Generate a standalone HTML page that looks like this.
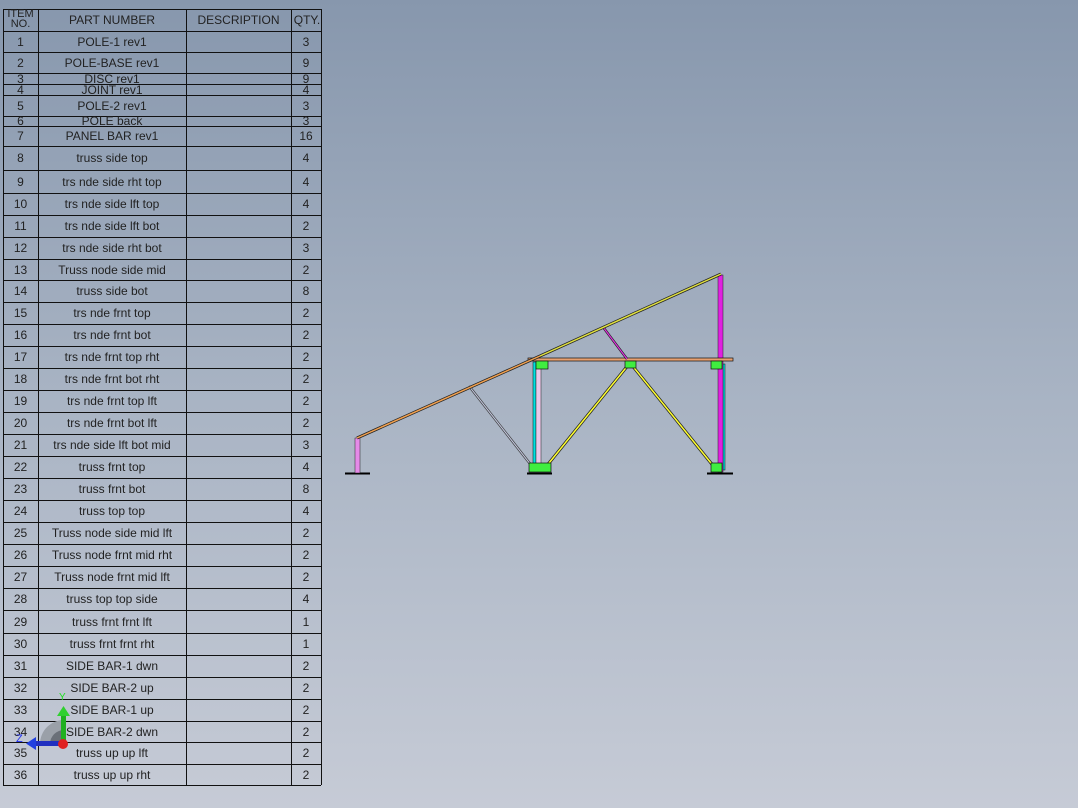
<!DOCTYPE html>
<html><head><style>
body{margin:0;width:1078px;height:808px;overflow:hidden;background:linear-gradient(#8797ad,#a9b4c4 50%,#c6cbd6);font-family:"Liberation Sans",sans-serif;position:relative}
.h{position:absolute;left:3px;width:318px;height:1px;background:#111}
.v{position:absolute;top:9px;height:776px;width:1px;background:#111}
.t{position:absolute;font-size:12px;color:#222;text-align:center;white-space:nowrap;line-height:12px}
</style></head><body>
<div id="tb"></div>
<svg style="position:absolute;left:0;top:0" width="1078" height="808">
<g stroke-linecap="butt">
<line x1="345" y1="473.5" x2="370" y2="473.5" stroke="#000" stroke-width="2"/>
<line x1="527" y1="473.5" x2="552" y2="473.5" stroke="#000" stroke-width="2"/>
<line x1="707" y1="473.5" x2="733" y2="473.5" stroke="#000" stroke-width="2"/>
<rect x="355" y="438" width="5" height="35" fill="#e58ae8" stroke="#222" stroke-width=".5"/>
<line x1="469" y1="386" x2="531" y2="465" stroke="#444" stroke-width="2.5"/>
<line x1="469" y1="386" x2="531" y2="465" stroke="#c8cde8" stroke-width="1"/>
<rect x="533" y="362" width="3" height="106" fill="#00e0e0" stroke="#111" stroke-width=".5"/>
<rect x="536" y="362" width="5" height="106" fill="#e8c8e8" stroke="#222" stroke-width=".5"/>
<rect x="723" y="364" width="2" height="106" fill="#00e0e0" stroke="#111" stroke-width=".5"/>
<rect x="718" y="275" width="5" height="197" fill="#e020e0" stroke="#222" stroke-width=".5"/>
<rect x="528" y="358" width="205" height="3" fill="#e8a070" stroke="#111" stroke-width=".7"/>
<line x1="545" y1="468" x2="629" y2="364" stroke="#222" stroke-width="3"/>
<line x1="545" y1="468" x2="629" y2="364" stroke="#ffff30" stroke-width="1.5"/>
<line x1="631" y1="364" x2="715" y2="468" stroke="#222" stroke-width="3"/>
<line x1="631" y1="364" x2="715" y2="468" stroke="#ffff30" stroke-width="1.5"/>
<line x1="603" y1="327" x2="627" y2="359" stroke="#222" stroke-width="2.5"/>
<line x1="603" y1="327" x2="627" y2="359" stroke="#e030e0" stroke-width="1.2"/>
<line x1="357" y1="438" x2="540" y2="356" stroke="#222" stroke-width="3"/>
<line x1="357" y1="438" x2="540" y2="356" stroke="#f0a050" stroke-width="1.5"/>
<line x1="540" y1="356" x2="721" y2="274" stroke="#222" stroke-width="3"/>
<line x1="540" y1="356" x2="721" y2="274" stroke="#e0e040" stroke-width="1.5"/>
<g fill="#40ee40" stroke="#111" stroke-width=".7">
<rect x="536" y="361" width="12" height="8"/><rect x="625" y="361" width="11" height="7"/><rect x="711" y="361" width="11" height="8"/>
<rect x="529" y="463" width="22" height="9"/><rect x="711" y="463" width="11" height="9"/></g>
</g>
<g>
<path d="M40 744 A24 24 0 0 1 64 720 L64 744Z" fill="#9aa0a8"/>
<path d="M50 744 A14 14 0 0 1 64 730 L64 744Z" fill="#6a7078"/>
<rect x="61" y="714" width="5" height="30" fill="#20b020"/><path d="M57 716 L63.5 706 L70 716Z" fill="#30d030"/>
<rect x="34" y="741" width="28" height="5" fill="#2030c0"/><path d="M36 737 L26 743.5 L36 750Z" fill="#2040e0"/>
<circle cx="63" cy="744" r="5" fill="#e02020"/>
<text x="59" y="700" font-size="10" fill="#20e020" font-family="Liberation Sans">Y</text>
<text x="16" y="742" font-size="11" fill="#2030f0" font-family="Liberation Sans">Z</text>
</g>
</svg>
<script>
var ys=[9,31,52,73,84,95,116,126,146,170,193,215,237,259,280,302,324,346,368,390,412,434,456,478,500,522,544,566,588,610,633,655,677,699,721,742,764,785];
var d=[["POLE-1 rev1",3],["POLE-BASE rev1",9],["DISC rev1",9],["JOINT rev1",4],["POLE-2 rev1",3],["POLE back",3],["PANEL BAR rev1",16],["truss side top",4],["trs nde side rht top",4],["trs nde side lft top",4],["trs nde side lft bot",2],["trs nde side rht bot",3],["Truss node side mid",2],["truss side bot",8],["trs nde frnt top",2],["trs nde frnt bot",2],["trs nde frnt top rht",2],["trs nde frnt bot rht",2],["trs nde frnt top lft",2],["trs nde frnt bot lft",2],["trs nde side lft bot mid",3],["truss frnt top",4],["truss frnt bot",8],["truss top top",4],["Truss node side mid lft",2],["Truss node frnt mid rht",2],["Truss node frnt mid lft",2],["truss top top side",4],["truss frnt frnt lft",1],["truss frnt frnt rht",1],["SIDE BAR-1 dwn",2],["SIDE BAR-2 up",2],["SIDE BAR-1 up",2],["SIDE BAR-2 dwn",2],["truss up up lft",2],["truss up up rht",2]];
var h="";ys.forEach(function(y){h+='<div class="h" style="top:'+y+'px"></div>'});
[3,38,186,291,321].forEach(function(x){h+='<div class="v" style="left:'+x+'px"></div>'});
function t(x,w,y,s){return '<div class="t" style="left:'+x+'px;width:'+w+'px;top:'+y+'px">'+s+'</div>'}
h+='<div class="t" style="left:3px;width:35px;top:9px;font-size:11px;line-height:10px">ITEM<br>NO.</div>';
h+=t(38,148,14,"PART NUMBER")+t(186,105,14,"DESCRIPTION")+t(291,32,14,"QTY.");
d.forEach(function(r,i){var c=(ys[i+1]+ys[i+2])/2-6;h+=t(3,35,c,i+1)+t(38,148,c,r[0])+t(291,30,c,r[1])});
document.getElementById("tb").innerHTML=h;
</script>
</body></html>
